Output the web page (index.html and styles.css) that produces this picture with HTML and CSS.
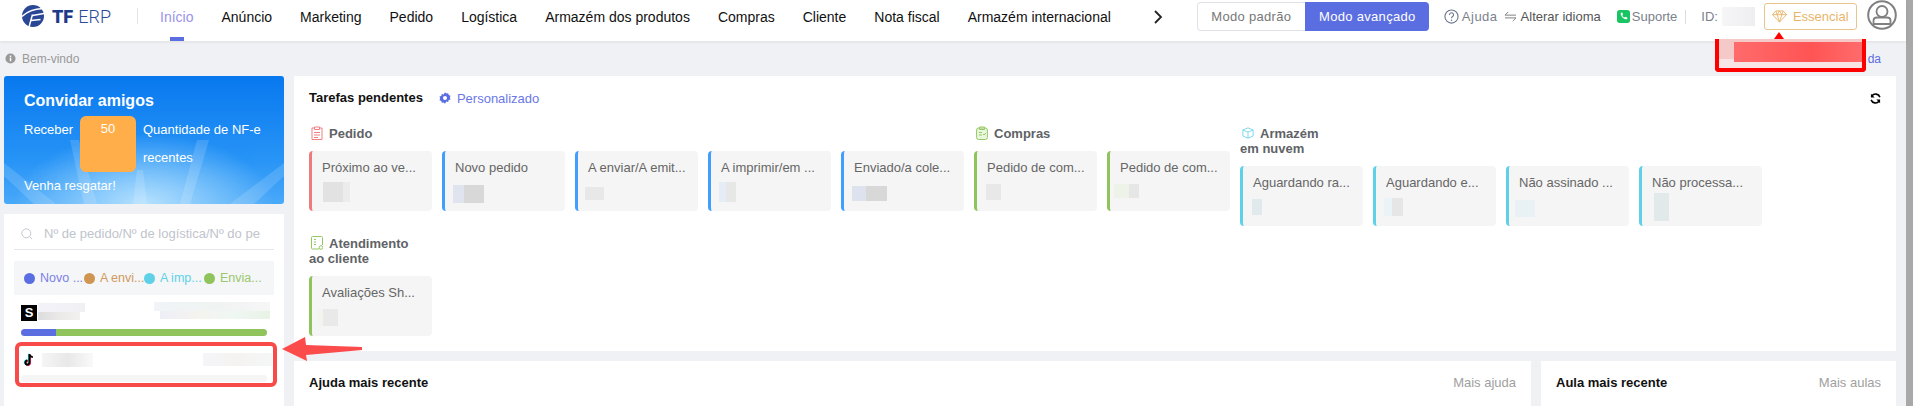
FILE: index.html
```html
<!DOCTYPE html>
<html lang="pt">
<head>
<meta charset="utf-8">
<title>TF ERP</title>
<link rel="stylesheet" href="styles.css">
</head>
<body>
<div class="app">
<header class="topbar">
  <div class="logo">
    <svg class="logo-mark" viewBox="0 0 22 22"><circle cx="11" cy="11" r="11" fill="#2a4795"/><path d="M0 11.500C5 6.500 12 4 21 3.500M7 22l3.500-12.500M10.500 10.500L22 8.500M9 15.500l9.500-1" fill="none" stroke="#fff" stroke-width="1.500"/></svg>
    <span class="logo-tf">TF</span><span class="logo-erp">ERP</span>
  </div>
  <span class="logo-sep"></span>
  <nav class="nav">
    <a class="nav-item active">Início</a>
    <a class="nav-item">Anúncio</a>
    <a class="nav-item">Marketing</a>
    <a class="nav-item">Pedido</a>
    <a class="nav-item">Logística</a>
    <a class="nav-item">Armazém dos produtos</a>
    <a class="nav-item">Compras</a>
    <a class="nav-item">Cliente</a>
    <a class="nav-item">Nota fiscal</a>
    <a class="nav-item">Armazém internacional</a>
  </nav>
  <svg class="nav-next" viewBox="0 0 10 14"><path d="M2 1l6 6-6 6" fill="none" stroke="#222" stroke-width="1.800"/></svg>
  <div class="modes">
    <span class="mode">Modo padrão</span>
    <span class="mode mode-on">Modo avançado</span>
  </div>
  <div class="tools">
    <svg class="ic-help" viewBox="0 0 16 16"><circle cx="8" cy="8" r="7" fill="none" stroke="#6d7690" stroke-width="1.200"/><path d="M5.800 6.300a2.200 2.200 0 1 1 3.400 1.800c-.8.500-1.200.9-1.200 1.800" fill="none" stroke="#6d7690" stroke-width="1.200"/><circle cx="8" cy="12" r=".8" fill="#6d7690"/></svg>
    <span class="tool-help tool-wide">Ajuda</span>
    <svg class="ic-swap" viewBox="0 0 14 12"><path d="M13 4.500H1L4.500 1M1 7.500h12L9.500 11" fill="none" stroke="#777" stroke-width="1"/></svg>
    <span class="tool-lang">Alterar idioma</span>
    <svg class="ic-wa" viewBox="0 0 14 14"><rect width="14" height="14" rx="3" fill="#19c463"/><path d="M4 3l1.600-.4 1 2.300-.9.900c.4 1 1.300 1.900 2.400 2.400l.9-.9 2.300 1-.4 1.700c-3.500.6-7.400-3.300-6.900-7z" fill="#fff"/></svg>
    <span class="tool-help">Suporte</span>
    <span class="tool-sep"></span>
    <span class="tool-id">ID:</span>
    <span class="blur blur-id"></span>
    <span class="plan">
      <svg class="ic-gem" viewBox="0 0 16 14"><path d="M4 1h8l3.500 4L8 13 .5 5z M.5 5h15M5.500 5L8 13l2.500-8M4 1l1.500 4L8 1l2.500 4L12 1" fill="none" stroke="#e8b56a" stroke-width="1"/></svg>
      Essencial
    </span>
    <svg class="avatar" viewBox="0 0 30 30"><circle cx="15" cy="15" r="13.800" fill="none" stroke="#808080" stroke-width="2"/><circle cx="15" cy="11.500" r="5.500" fill="none" stroke="#808080" stroke-width="1.800"/><path d="M6.500 24v-3.500c0-2 1.500-3 3.500-3h10c2 0 3.500 1 3.500 3V24z" fill="none" stroke="#808080" stroke-width="1.800"/></svg>
  </div>
</header>

<div class="crumbs">
  <svg class="ic-info" viewBox="0 0 12 12"><circle cx="6" cy="6" r="5.500" fill="#999"/><rect x="5.200" y="5" width="1.600" height="4" fill="#fff"/><rect x="5.200" y="2.800" width="1.600" height="1.500" fill="#fff"/></svg>
  <span class="crumb-text">Bem-vindo</span>
  <a class="crumb-link">da</a>
</div>

<main class="page">
  <aside class="side">
    <section class="hero">
      <svg class="hero-rays" viewBox="0 0 280 128" preserveAspectRatio="none"><g fill="#fff" opacity=".14"><polygon points="129,128 143,128 139,94 133,94"/><polygon points="176,128 186,128 205,64 193,64"/><polygon points="226,128 250,128 280,100 280,87"/><polygon points="0,87 0,100 30,128 52,128"/><polygon points="66,64 75,64 93,128 80,128"/></g></svg>
      <h2 class="hero-title">Convidar amigos</h2>
      <div class="hero-row">
        <span class="hero-get">Receber</span>
        <span class="hero-num">50</span>
        <span class="hero-desc">Quantidade de NF-e recentes</span>
      </div>
      <div class="hero-foot">Venha resgatar!</div>
    </section>
    <section class="stores">
      <div class="search">
        <svg class="ic-search" viewBox="0 0 14 14"><circle cx="6.200" cy="6.200" r="5.200" fill="none" stroke="#c0c4cc" stroke-width="1.100"/><path d="M10 10l3 3" stroke="#c0c4cc" stroke-width="1.100"/></svg>
        <span class="search-text">Nº de pedido/Nº de logística/Nº do pe</span>
      </div>
      <div class="legend">
        <span class="leg"><i class="dot d-blue"></i><span class="leg-t t-blue">Novo ...</span></span>
        <span class="leg"><i class="dot d-orange"></i><span class="leg-t t-orange">A envi...</span></span>
        <span class="leg"><i class="dot d-cyan"></i><span class="leg-t t-cyan">A imp...</span></span>
        <span class="leg"><i class="dot d-green"></i><span class="leg-t t-green">Envia...</span></span>
      </div>
      <div class="store store-s">
        <span class="s-logo">S</span>
        <div class="store-l"><span class="blur b-s1"></span><span class="blur b-s2"></span></div>
        <div class="store-r"><span class="blur b-s3"></span><span class="blur b-s4"></span></div>
      </div>
      <div class="bar"><span class="bar-blue"></span><span class="bar-green"></span></div>
      <div class="store store-t">
        <svg class="ic-tt" viewBox="0 0 14 16"><path d="M7.500 1v10a2.400 2.400 0 1 1-2.400-2.400" fill="none" stroke="#25f4ee" stroke-width="2.200" transform="translate(-.7 -.4)"/><path d="M7.500 1v10a2.400 2.400 0 1 1-2.400-2.400" fill="none" stroke="#fe2c55" stroke-width="2.200" transform="translate(.8 .5)"/><path d="M7.500 1v10a2.400 2.400 0 1 1-2.400-2.400M7.500 1c.2 2 1.600 3.400 4 3.600" fill="none" stroke="#000" stroke-width="2.200"/></svg>
        <span class="blur b-t1"></span>
        <span class="blur b-t2"></span>
      </div>
      <div class="bar bar-empty"></div>
    </section>
  </aside>

  <div class="content">
    <section class="panel tasks">
      <div class="tasks-head">
        <h3 class="panel-title">Tarefas pendentes</h3>
        <svg class="ic-gear" viewBox="0 0 12 12"><path d="M6 .3l1.300 1.300 1.900-.3.500 1.800 1.800.7-.6 1.800.6 1.800-1.800.7-.5 1.800-1.900-.3L6 11.700 4.700 10.400l-1.900.3-.5-1.800-1.800-.7.600-1.800-.6-1.800 1.800-.7.500-1.800 1.900.3z" fill="#5b6ee1"/><circle cx="6" cy="6" r="2" fill="#fff"/></svg>
        <a class="custom">Personalizado</a>
        <svg class="ic-refresh" viewBox="0 0 12 12"><path d="M10.800 4.500A5 5 0 0 0 2 3.300M1.200 7.500A5 5 0 0 0 10 8.700" fill="none" stroke="#000" stroke-width="1.700"/><path d="M1 .8v4h4zM11 11.200v-4H7z" fill="#000"/></svg>
      </div>
      <div class="groups">
        <div class="group">
          <h4 class="group-head"><svg class="g-ic" viewBox="0 0 12 14"><path d="M3.500 2H1v11.500h10V2H8.500M3.500 1h5v2.500h-5zM3 6.500h6M3 9h6M3 11.500h4" fill="none" stroke="#ef8080"/></svg>Pedido</h4>
          <div class="cards">
            <div class="card c-red"><p class="card-t">Próximo ao ve...</p><span class="blur n1"></span></div>
            <div class="card c-blue"><p class="card-t">Novo pedido</p><span class="blur n2"></span></div>
            <div class="card c-blue"><p class="card-t">A enviar/A emit...</p><span class="blur n3"></span></div>
            <div class="card c-blue"><p class="card-t">A imprimir/em ...</p><span class="blur n4"></span></div>
            <div class="card c-blue"><p class="card-t">Enviado/a cole...</p><span class="blur n5"></span></div>
          </div>
        </div>
        <div class="group">
          <h4 class="group-head"><svg class="g-ic" viewBox="0 0 12 14"><rect x=".6" y="2" width="10.800" height="11.500" rx="2" fill="#eaf5e0" stroke="#94c862"/><path d="M3.500 1h5v2.500h-5zM3 6.500h3M3 9h3M7 8l1 1 2-2" fill="none" stroke="#94c862"/></svg>Compras</h4>
          <div class="cards">
            <div class="card c-green"><p class="card-t">Pedido de com...</p><span class="blur n6"></span></div>
            <div class="card c-green"><p class="card-t">Pedido de com...</p><span class="blur n7"></span></div>
          </div>
        </div>
        <div class="group">
          <h4 class="group-head"><svg class="g-ic" viewBox="0 0 14 14"><path d="M7 1l6 2.500v7L7 13l-6-2.500v-7zM1 3.500L7 6l6-2.500M7 6v7" fill="none" stroke="#6dd3ea"/></svg>Armazém<br>em nuvem</h4>
          <div class="cards">
            <div class="card c-cyan"><p class="card-t">Aguardando ra...</p><span class="blur n8"></span></div>
            <div class="card c-cyan"><p class="card-t">Aguardando e...</p><span class="blur n9"></span></div>
            <div class="card c-cyan"><p class="card-t">Não assinado ...</p><span class="blur n10"></span></div>
            <div class="card c-cyan"><p class="card-t">Não processa...</p><span class="blur n11"></span></div>
          </div>
        </div>
        <div class="group">
          <h4 class="group-head"><svg class="g-ic" viewBox="0 0 12 14"><path d="M8 13H1.500a1 1 0 0 1-1-1V1.500a1 1 0 0 1 1-1h9a1 1 0 0 1 1 1V9M3 3.500h2M3 6h2M3 8.500h2" fill="none" stroke="#94c862"/><circle cx="10" cy="11.500" r="1.800" fill="none" stroke="#94c862"/></svg>Atendimento<br>ao cliente</h4>
          <div class="cards">
            <div class="card c-green"><p class="card-t">Avaliações Sh...</p><span class="blur n12"></span></div>
          </div>
        </div>
      </div>
    </section>
    <div class="bottom">
      <section class="panel lower help">
        <h3 class="panel-title">Ajuda mais recente</h3>
        <a class="more">Mais ajuda</a>
      </section>
      <section class="panel lower class">
        <h3 class="panel-title">Aula mais recente</h3>
        <a class="more">Mais aulas</a>
      </section>
    </div>
  </div>
</main>
</div>
<div class="scroll"></div>

<div class="mark-tip"></div>
<div class="mark-box"><span class="mark-blur"></span></div>
<div class="mark-store"></div>
<svg class="mark-arrow" viewBox="0 0 82 26"><polygon points="0,12 23,0 24,8 80,10 80,13 24,18 25,24" fill="#fb4b4b"/></svg>
</body>
</html>
```

FILE: styles.css
```css
* { box-sizing: border-box; }
html, body { margin: 0; height: 406px; overflow: hidden; }
body { display: flex; background: #f0f1f5; font-family: "Liberation Sans", Arial, sans-serif; font-size: 13px; color: #333; position: relative; }
h2, h3, h4, p { margin: 0; }
.app { width: 1906px; flex: none; }
.scroll { width: 7px; flex: none; background: #a8a8a8; }

.topbar { height: 41px; background: #fff; display: flex; align-items: flex-start; box-shadow: 0 1px 3px rgba(0,0,0,.08); position: relative; }
.logo { display: flex; align-items: center; width: 137px; height: 32px; padding-left: 22px; flex: none; }
.logo-mark { width: 22px; height: 22px; flex: none; }
.logo-tf { font-family: Roboto, sans-serif; font-weight: 900; font-size: 18px; color: #1e3a8a; margin-left: 8px; }
.logo-erp { font-family: Roboto, sans-serif; font-weight: 300; font-size: 18px; color: #2c4a9a; margin-left: 5px; }
.logo-sep { width: 1px; height: 16px; margin: 8px 8px 0 0; background: #e2e4ea; flex: none; }
.nav { display: flex; flex: none; }
.nav-item { display: block; height: 41px; line-height: 34px; padding: 0 14px; font-size: 14px; color: #111; position: relative; }
.nav-item.active { color: #9a93e8; }
.nav-item.active::after { content: ""; position: absolute; left: 50%; bottom: 0; width: 14px; height: 4px; margin-left: -7px; background: #5b6ee1; }
.nav-next { width: 10px; height: 14px; margin: 10px 0 0 28px; flex: none; }
.modes { display: flex; margin: 2px 0 0 34px; height: 29px; flex: none; }
.mode { width: 108px; border: 1px solid #e0e2ea; border-right: 0; border-radius: 4px 0 0 4px; font-size: 13px; line-height: 27px; text-align: center; color: #777; letter-spacing: .3px; }
.mode-on { width: 124px; background: #5b6ee1; border-color: #5b6ee1; color: #fff; border-radius: 0 4px 4px 0; }
.tools { display: flex; align-items: center; height: 33px; margin-left: 15px; font-size: 13px; flex: none; }
.ic-help { width: 15px; height: 15px; }
.tool-help { color: #7b7f8c; margin-left: 2px; }
.tool-wide { letter-spacing: .5px; margin-left: 3px; }
.ic-swap { width: 13px; height: 11px; margin-left: 6px; }
.tool-lang { color: #555; margin-left: 4px; }
.ic-wa { width: 13px; height: 13px; margin-left: 16px; }
.tool-sep { width: 1px; height: 14px; background: #ddd; margin: 0 15px 0 8px; }
.tool-id { color: #7b7f8c; }
.blur { display: block; }
.blur-id { width: 33px; height: 19px; margin-left: 4px; background: linear-gradient(90deg, #f6f6f7, #eeeef0); }
.plan { display: flex; align-items: center; width: 93px; height: 27px; margin-left: 9px; border: 1px solid #e8c58c; border-radius: 3px; color: #e8b56a; padding-left: 7px; }
.ic-gem { width: 15px; height: 13px; margin-right: 6px; }
.avatar { width: 30px; height: 30px; margin-left: 10px; margin-top: -4px; }

.crumbs { display: flex; align-items: center; height: 35px; padding-left: 5px; font-size: 12px; color: #999; position: relative; }
.ic-info { width: 11px; height: 11px; margin: 0 6px 0 0; }
.crumb-text { flex: 1; }
.crumb-link { color: #5b6ee1; margin-right: 25px; }

.page { display: flex; padding-left: 4px; height: 330px; }
.side { width: 280px; flex: none; }
.hero { height: 128px; border-radius: 3px; position: relative; overflow: hidden; padding: 16px 20px 0; color: #fff; background: radial-gradient(ellipse 130px 70px at 50% 100%, rgba(200,235,255,.85), rgba(200,235,255,0)), linear-gradient(180deg, #0878ef 0%, #2794f6 65%, #4aa9f9 100%); }
.hero-rays { position: absolute; inset: 0; width: 100%; height: 100%; }
.hero-title { position: relative; font-size: 16px; line-height: 18px; }
.hero-row { position: relative; display: flex; margin-top: 6px; }
.hero-get { line-height: 28px; width: 56px; flex: none; }
.hero-num { width: 56px; height: 56px; border-radius: 6px; background: #ffae4a; text-align: center; line-height: 26px; flex: none; }
.hero-desc { margin-left: 7px; line-height: 28px; width: 122px; }
.hero-foot { position: relative; line-height: 28px; }

.stores { margin-top: 10px; height: 192px; background: #fff; padding: 0 10px; }
.search { height: 36px; border-bottom: 1px solid #e4e6ee; display: flex; align-items: center; padding: 4px 0 0 7px; overflow: hidden; }
.ic-search { width: 12px; height: 12px; flex: none; }
.search-text { font-size: 13px; color: #c0c4cc; margin-left: 11px; white-space: nowrap; }
.legend { margin-top: 11px; height: 34px; background: #f5f6f8; display: flex; align-items: center; padding-left: 10px; font-size: 12.500px; }
.leg { display: flex; align-items: center; width: 60px; }
.dot { width: 11px; height: 11px; border-radius: 50%; flex: none; }
.d-blue { background: #5b6ee1; }
.d-orange { background: #cf9551; }
.d-cyan { background: #5ed0e8; }
.d-green { background: #8fc35c; }
.leg-t { margin-left: 5px; white-space: nowrap; }
.t-blue { color: #7c80e6; }
.t-orange { color: #d09a5c; }
.t-cyan { color: #5ed0e8; }
.t-green { color: #9ac76c; }

.store { position: relative; display: flex; justify-content: space-between; }
.store-s { height: 25px; margin-top: 7px; padding: 3px 4px 0 7px; }
.s-logo { width: 16px; height: 16px; background: #000; color: #fff; font-weight: 700; font-size: 13px; line-height: 16px; text-align: center; flex: none; }
.store-l { margin: -2px auto 0 1px; }
.store-r { margin-top: -3px; }
.b-s1 { width: 47px; height: 9px; background: linear-gradient(90deg, #f2f2f8, #f0f0f4); }
.b-s2 { width: 42px; height: 8px; background: linear-gradient(90deg, #ddd, #ebe8e8, #f2f0f0); }
.b-s3 { width: 116px; height: 9px; background: linear-gradient(90deg, #f1f4f8, #eff3f1, #f6f6f6); }
.b-s4 { width: 110px; height: 8px; margin-left: 6px; background: linear-gradient(90deg, #eeeef8, #f5f3ee, #eff7f3, #e9f2e5); }
.bar { display: flex; height: 7px; margin: 2px 7px 0; border-radius: 4px; overflow: hidden; }
.bar-blue { width: 35px; background: #5b6ee1; }
.bar-green { flex: 1; background: #8fc35c; }
.bar-empty { background: #f5f5f5; margin-top: 0; }
.store-t { height: 22px; margin-top: 17px; padding: 0 2px 0 9px; align-items: flex-start; }
.ic-tt { width: 12px; height: 14px; flex: none; }
.b-t1 { width: 51px; height: 14px; margin: 0 auto 0 7px; background: linear-gradient(90deg, #f5f5f5, #e8e8e8, #f8f9f8); }
.b-t2 { width: 69px; height: 13px; background: linear-gradient(90deg, #f4f5f9, #f5f3f1, #f4f7f6); }

.content { width: 1602px; margin-left: 10px; flex: none; }
.panel { background: #fff; }
.tasks { height: 275px; padding: 14px 15px 0; position: relative; }
.tasks-head { display: flex; align-items: center; height: 16px; }
.panel-title { font-size: 13px; line-height: 16px; font-weight: 700; color: #111; }
.ic-gear { width: 12px; height: 12px; margin-left: 16px; }
.custom { color: #6a78e6; font-size: 13px; margin-left: 6px; flex: 1; }
.ic-refresh { width: 11px; height: 11px; }
.groups { display: flex; flex-wrap: wrap; align-items: flex-start; margin-top: 20px; }
.group-head { font-size: 13px; line-height: 15px; color: #606266; margin-bottom: 10px; }
.g-ic { width: 12px; height: 14px; margin: 0 6px 0 2px; vertical-align: -2px; }
.cards { display: flex; }
.card { width: 123px; height: 60px; margin: 0 10px 10px 0; border-left: 3px solid; border-radius: 4px; background: #f5f5f5; padding: 9px 10px 0; position: relative; }
.c-red { border-color: #ec7b7b; }
.c-blue { border-color: #409eff; }
.c-green { border-color: #8fc35c; }
.c-cyan { border-color: #5ed0e8; }
.card-t { font-size: 13px; line-height: 16px; color: #666; white-space: nowrap; }
.card .blur { position: absolute; }
.card .n1 { left: 11px; top: 31px; width: 27px; height: 20px; background: linear-gradient(90deg, #e2e2e2 75%, #ececec 75%); }
.card .n2 { left: 8px; top: 34px; width: 31px; height: 18px; background: linear-gradient(90deg, #dfe4ee 35%, #d8d8d8 35%); }
.card .n3 { left: 7px; top: 36px; width: 19px; height: 13px; background: #e8e8e8; }
.card .n4 { left: 8px; top: 31px; width: 17px; height: 20px; background: linear-gradient(90deg, #e6ecf6 40%, #e6e8e6 40%); }
.card .n5 { left: 8px; top: 35px; width: 35px; height: 15px; background: linear-gradient(90deg, #dde2ee 40%, #d8d8d8 40%); }
.card .n6 { left: 9px; top: 33px; width: 15px; height: 16px; background: #e8e8e8; }
.card .n7 { left: 4px; top: 33px; width: 25px; height: 14px; background: linear-gradient(90deg, #edf3e8 60%, #e6e6e6 60%); }
.card .n8 { left: 9px; top: 33px; width: 10px; height: 16px; background: #e0eaec; }
.card .n9 { left: 8px; top: 32px; width: 19px; height: 18px; background: linear-gradient(90deg, #eaf4f8 40%, #e6e6e6 40%); }
.card .n10 { left: 6px; top: 34px; width: 20px; height: 17px; background: #e8f2f5; }
.card .n11 { left: 12px; top: 27px; width: 15px; height: 28px; background: #e2e9ea; }
.card .n12 { left: 6px; top: 33px; width: 20px; height: 17px; background: linear-gradient(90deg, #f1f5ee 25%, #e9e9e9 25%); }

.bottom { display: flex; margin-top: 10px; height: 45px; }
.lower { display: flex; justify-content: space-between; padding: 14px 15px 0; }
.help { width: 1237px; }
.class { width: 355px; margin-left: 10px; }
.more { color: #a0a0a0; font-size: 13px; }

.mark-tip { position: absolute; left: 1774px; top: 32px; border: 5px solid transparent; border-top: 0; border-bottom: 7px solid #f00; }
.mark-box { position: absolute; left: 1715px; top: 39px; width: 151px; height: 33px; border: 4px solid #f00; border-top: 0; border-radius: 0 0 4px 4px; background: linear-gradient(#f6c9c9 70%, #f8e4e4 70%); padding: 3px 0 0 15px; }
.mark-blur { display: block; height: 20px; background: linear-gradient(90deg, #ff6b6b, #ff5454 60%, #ff6b6b); }
.mark-store { position: absolute; left: 15px; top: 342px; width: 262px; height: 45px; border: 4px solid #f94a4a; border-radius: 6px; }
.mark-arrow { position: absolute; left: 282px; top: 337px; width: 82px; height: 26px; }
```
